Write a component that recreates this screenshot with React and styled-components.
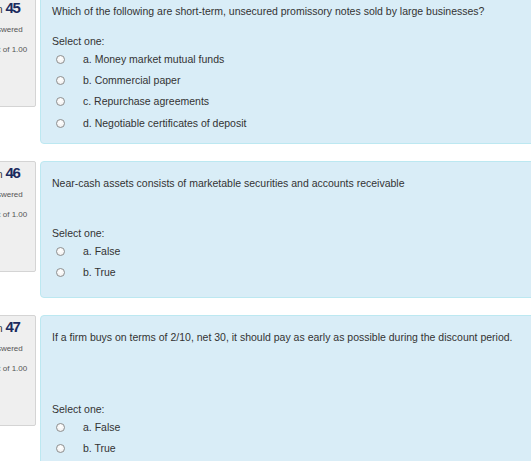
import React from "react";
import styled, { createGlobalStyle } from "styled-components";

const Global = createGlobalStyle`
  html, body { margin: 0; padding: 0; background: #ffffff; overflow: hidden; }
  body { font-family: "Liberation Sans", Arial, sans-serif; color: #333333; }
`;

const Page = styled.div`
  width: 531px;
  display: flex;
  flex-direction: column;
  gap: 16.5px;
  margin-top: -11px;
`;

const Question = styled.div`
  display: flex;
  align-items: flex-start;
  gap: 4px;
`;

const Info = styled.div`
  flex: none;
  box-sizing: border-box;
  width: 84px;
  height: 111px;
  margin-left: -48px;
  margin-top: ${(p) => p.$offset || 0}px;
  padding: 3px 7px 0 7.5px;
  background: #efefef;
  border: 1px solid #d4d4d4;
  border-radius: 2px;
  white-space: nowrap;
`;

const Header = styled.h3`
  margin: 0;
  font-weight: normal;
  font-size: 10.5px;
  line-height: 16px;
  color: #333333;
`;

const Qno = styled.span`
  font-size: 15px;
  font-weight: bold;
  letter-spacing: -1.3px;
  color: #1b2a5e;
`;

const State = styled.div`
  margin-top: 3px;
  font-size: 8px;
  line-height: 20px;
  color: #555555;
`;

const Grade = styled.div`
  font-size: 8px;
  line-height: 20px;
  color: #555555;
`;

const Formulation = styled.div`
  flex: 1;
  margin-right: -12px;
  box-sizing: border-box;
  padding: 12px 11px ${(p) => p.$tail}px 11px;
  background: #d9edf7;
  border: 1px solid #bce8f1;
  border-radius: 4px;
  font-size: 10.5px;
`;

const QText = styled.p`
  margin: 0 0 ${(p) => p.$space}px 0;
  line-height: 18px;
  white-space: nowrap;
`;

const Prompt = styled.div`
  line-height: 15px;
`;

const Options = styled.div`
  display: flex;
  flex-direction: column;
`;

const Option = styled.label`
  display: flex;
  align-items: center;
  height: 21.3px;
  line-height: 21px;
`;

const Radio = styled.span`
  flex: none;
  box-sizing: border-box;
  width: 9px;
  height: 9px;
  margin: 0 18.5px 0 3.5px;
  border-radius: 50%;
  border: 1px solid #8f8f8f;
  background: radial-gradient(circle at 50% 35%, #ffffff 0%, #f4f4f4 60%, #e2e2e2 100%);
`;

const questions = [
  {
    no: 45,
    offset: 7,
    space: 13.5,
    tail: 9.5,
    text: "Which of the following are short-term, unsecured promissory notes sold by large businesses?",
    options: [
      "a. Money market mutual funds",
      "b. Commercial paper",
      "c. Repurchase agreements",
      "d. Negotiable certificates of deposit",
    ],
  },
  {
    no: 46,
    offset: 0,
    space: 34,
    tail: 14,
    text: "Near-cash assets consists of marketable securities and accounts receivable",
    options: ["a. False", "b. True"],
  },
  {
    no: 47,
    offset: 0,
    space: 56,
    tail: 15,
    text: "If a firm buys on terms of 2/10, net 30, it should pay as early as possible during the discount period.",
    options: ["a. False", "b. True"],
  },
];

export default function App() {
  return (
    <>
      <Global />
      <Page>
        {questions.map((q) => (
          <Question key={q.no}>
            <Info $offset={q.offset}>
              <Header>
                Question <Qno>{q.no}</Qno>
              </Header>
              <State>Not yet answered</State>
              <Grade>Marked out of 1.00</Grade>
            </Info>
            <Formulation $tail={q.tail}>
              <QText $space={q.space}>{q.text}</QText>
              <Prompt>Select one:</Prompt>
              <Options>
                {q.options.map((o) => (
                  <Option key={o}>
                    <Radio />
                    {o}
                  </Option>
                ))}
              </Options>
            </Formulation>
          </Question>
        ))}
      </Page>
    </>
  );
}
